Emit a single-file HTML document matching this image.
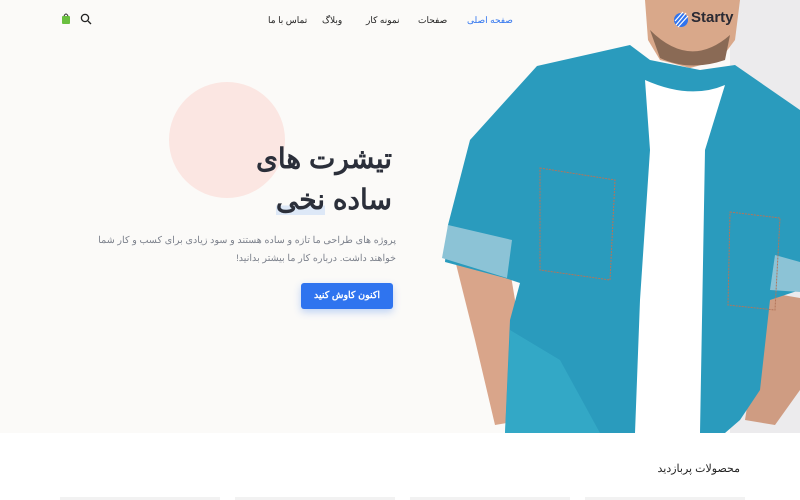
<!DOCTYPE html>
<html lang="fa"><head><meta charset="utf-8">
<style>
*{margin:0;padding:0;box-sizing:border-box}
body{width:800px;height:500px;overflow:hidden;background:#fff;font-family:"Liberation Sans","Noto Sans CJK SC",sans-serif;position:relative}
.hero{position:absolute;left:0;top:0;width:800px;height:433px;background:#fbfaf8}
svg{position:absolute;left:0;top:0}
.nav a{position:absolute;top:15px;font-size:9px;color:#222;text-decoration:none;white-space:nowrap}
.t{position:absolute;right:408px;color:#2b2f3a;font-weight:bold;font-size:28px;direction:rtl;white-space:nowrap}
.p{position:absolute;left:80px;top:232px;width:316px;font-size:9.6px;line-height:18px;color:#7a7f8a;direction:rtl;text-align:right}
.btn{position:absolute;left:301px;top:283px;width:92px;height:26px;background:#2f74ef;color:#fff;font-size:9.5px;font-weight:bold;border-radius:3px;text-align:center;line-height:26px;box-shadow:0 3px 8px rgba(47,116,239,.3)}
</style></head><body>
<div class="hero"></div>
<svg width="800" height="500" viewBox="0 0 800 500">
<rect x="730" y="0" width="70" height="433" fill="#ecebed"/>
<circle cx="227" cy="140" r="58" fill="#fbe6e2"/>
<path d="M645 0 L740 0 L735 40 L720 60 L690 68 L660 60 L648 40 Z" fill="#d9a88a"/>
<path d="M650 30 Q690 70 730 35 L725 60 Q690 72 660 58 Z" fill="#8a6a55"/>
<path d="M455 260 L510 270 L520 330 L525 420 L495 425 L475 340 Z" fill="#d9a58a"/>
<path d="M765 292 L800 298 L800 390 L775 425 L745 420 Z" fill="#cf9c82"/>
<path d="M537 66 L630 45 L650 60 L700 70 L735 65 L800 110 L800 290 L770 300 L760 390 L740 420 L725 433 L505 433 L510 320 L520 283 L505 278 L445 262 L448 225 L470 140 Z" fill="#2a9bbd"/>
<path d="M505 433 L510 330 L560 360 L600 433 Z" fill="#3bb0cc" opacity=".6"/>
<path d="M448 225 L512 240 L507 278 L442 258 Z" fill="#8cc3d6"/>
<path d="M775 255 L800 262 L800 292 L770 290 Z" fill="#8cc3d6"/>
<path d="M645 80 Q690 100 725 85 L705 150 L700 433 L635 433 L640 300 L650 150 Z" fill="#ffffff"/>
<path d="M540 168 L615 180 L610 280 L540 270 Z" fill="none" stroke="#b3755a" stroke-width="1" stroke-dasharray="2 1"/>
<path d="M730 212 L780 218 L775 310 L728 305 Z" fill="none" stroke="#b3755a" stroke-width="1" stroke-dasharray="2 1"/>
<rect x="0" y="433" width="800" height="67" fill="#fff"/>
<rect x="60" y="497" width="160" height="3" fill="#f2f2f2"/>
<rect x="235" y="497" width="160" height="3" fill="#f2f2f2"/>
<rect x="410" y="497" width="160" height="3" fill="#f2f2f2"/>
<rect x="585" y="497" width="160" height="3" fill="#f2f2f2"/>
<circle cx="681" cy="20" r="7" fill="#2f74ef"/>
<path d="M676 25 L686 13 M678 27 L688 16 M675 21 L683 12" stroke="#fff" stroke-width="1.2"/>
<circle cx="85" cy="18" r="3.6" fill="none" stroke="#222" stroke-width="1.3"/>
<path d="M88 21 L91 24" stroke="#222" stroke-width="1.3"/>
<rect x="62" y="16" width="8" height="8" rx="1" fill="#6abf3f"/>
<path d="M64 16 Q66 12 68 16" fill="none" stroke="#333" stroke-width="1"/>
</svg>
<div style="position:absolute;left:691px;top:9px;font-size:15px;font-weight:bold;color:#2a2a33">Starty</div>
<div class="nav">
<a style="left:467px;color:#2f74ef">صفحه اصلی</a>
<a style="left:418px">صفحات</a>
<a style="left:366px">نمونه کار</a>
<a style="left:322px">وبلاگ</a>
<a style="left:268px">تماس با ما</a>
</div>
<div class="t" style="top:142px">تیشرت های</div>
<div class="t" style="top:183px">ساده <span style="background:linear-gradient(transparent 70%,#dde8f7 70%)">نخی</span></div>
<div class="p">پروژه های طراحی ما تازه و ساده هستند و سود زیادی برای کسب و کار شما خواهند داشت. درباره کار ما بیشتر بدانید!</div>
<div class="btn">اکنون کاوش کنید</div>
<div style="position:absolute;right:60px;top:462px;font-size:11px;color:#222;direction:rtl">محصولات پربازدید</div>
</body></html>
